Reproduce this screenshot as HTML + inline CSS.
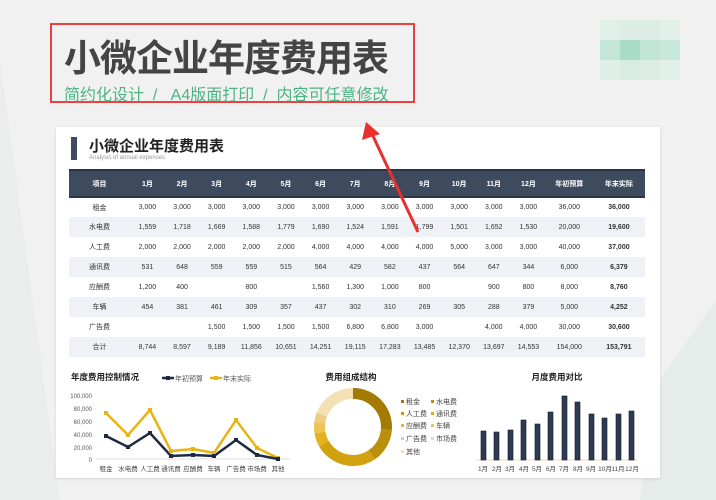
<!DOCTYPE html>
<html><head><meta charset="utf-8"><style>
*{margin:0;padding:0;box-sizing:border-box}
body{width:716px;height:500px;overflow:hidden;background:#f1f1f1;font-family:"Liberation Sans","Noto Sans CJK SC",sans-serif;position:relative}
.a{position:absolute}
.card{left:56px;top:127px;width:604px;height:351px;background:#fff;box-shadow:0 1px 3px rgba(0,0,0,.12)}
table{position:absolute;left:69px;top:169px;width:576px;border-collapse:collapse;font-size:7px;color:#333;table-layout:fixed}
th{background:#3e4a5e;color:#fff;height:27px;font-weight:bold;font-size:7px;border-top:2px solid #2c3545;border-bottom:2px solid #2c3545}
td{height:20px;text-align:center}
tr:nth-child(odd) td{background:#eef1f5}
td:last-child{font-weight:bold}
</style></head><body>
<svg class="a" style="left:0;top:0" width="716" height="500">
<polygon points="0,60 60,500 0,500" fill="#e9eeec"/>
<polygon points="660,380 716,300 716,500 640,500" fill="#e6ecea"/>
</svg>
<div class="a" style="left:600px;top:20px;width:80px;height:60px;display:grid;grid-template-columns:repeat(4,20px)">
<div style="background:#e0efe8"></div><div style="background:#dcede5"></div><div style="background:#dcede5"></div><div style="background:#e2f0e9"></div>
<div style="background:#c4e6d6"></div><div style="background:#a8dcc6"></div><div style="background:#c2e5d5"></div><div style="background:#c8e8d9"></div>
<div style="background:#dfeee7"></div><div style="background:#d9ece3"></div><div style="background:#dbede4"></div><div style="background:#e2f0e9"></div>
</div>
<div class="a" style="left:50px;top:23px;width:365px;height:80px;border:2px solid #e8413e"></div>
<div class="a" style="left:64px;top:28px;font-size:37px;font-weight:bold;color:#444;letter-spacing:-1px">小微企业年度费用表</div>
<div class="a" style="left:64px;top:81px;font-size:16px;color:#4db383;white-space:pre">简约化设计  /   A4版面打印  /  内容可任意修改</div>

<div class="a card"></div>
<div class="a" style="left:71px;top:137px;width:6px;height:23px;background:#3e4a5e"></div>
<div class="a" style="left:89px;top:135px;font-size:15px;font-weight:bold;color:#222">小微企业年度费用表</div>
<div class="a" style="left:89px;top:155px;font-size:6px;color:#999">Analysis of annual expenses</div>

<table>
<colgroup><col style="width:61px"><col span="12" style="width:34.6px"><col style="width:47px"><col style="width:52px"></colgroup>
<tr><th>项目</th><th>1月</th><th>2月</th><th>3月</th><th>4月</th><th>5月</th><th>6月</th><th>7月</th><th>8月</th><th>9月</th><th>10月</th><th>11月</th><th>12月</th><th>年初预算</th><th>年末实际</th></tr>
<tr><td>租金</td><td>3,000</td><td>3,000</td><td>3,000</td><td>3,000</td><td>3,000</td><td>3,000</td><td>3,000</td><td>3,000</td><td>3,000</td><td>3,000</td><td>3,000</td><td>3,000</td><td>36,000</td><td>36,000</td></tr>
<tr><td>水电费</td><td>1,559</td><td>1,718</td><td>1,669</td><td>1,588</td><td>1,779</td><td>1,690</td><td>1,524</td><td>1,591</td><td>1,799</td><td>1,501</td><td>1,652</td><td>1,530</td><td>20,000</td><td>19,600</td></tr>
<tr><td>人工费</td><td>2,000</td><td>2,000</td><td>2,000</td><td>2,000</td><td>2,000</td><td>4,000</td><td>4,000</td><td>4,000</td><td>4,000</td><td>5,000</td><td>3,000</td><td>3,000</td><td>40,000</td><td>37,000</td></tr>
<tr><td>通讯费</td><td>531</td><td>648</td><td>559</td><td>559</td><td>515</td><td>564</td><td>429</td><td>582</td><td>437</td><td>564</td><td>647</td><td>344</td><td>6,000</td><td>6,379</td></tr>
<tr><td>应酬费</td><td>1,200</td><td>400</td><td></td><td>800</td><td></td><td>1,560</td><td>1,300</td><td>1,000</td><td>800</td><td></td><td>900</td><td>800</td><td>8,000</td><td>8,760</td></tr>
<tr><td>车辆</td><td>454</td><td>381</td><td>461</td><td>309</td><td>357</td><td>437</td><td>302</td><td>310</td><td>269</td><td>305</td><td>288</td><td>379</td><td>5,000</td><td>4,252</td></tr>
<tr><td>广告费</td><td></td><td></td><td>1,500</td><td>1,500</td><td>1,500</td><td>1,500</td><td>6,800</td><td>6,800</td><td>3,000</td><td></td><td>4,000</td><td>4,000</td><td>30,000</td><td>30,600</td></tr>
<tr><td>合计</td><td>8,744</td><td>8,597</td><td>9,189</td><td>11,856</td><td>10,651</td><td>14,251</td><td>19,115</td><td>17,283</td><td>13,485</td><td>12,370</td><td>13,697</td><td>14,553</td><td>154,000</td><td>153,791</td></tr>
</table>

<svg class="a" style="left:0;top:0" width="716" height="500" font-family="Liberation Sans,Noto Sans CJK SC,sans-serif">
<text x="71" y="380" font-size="8.5" font-weight="bold" fill="#222">年度费用控制情况</text>
<line x1="162" y1="378" x2="174" y2="378" stroke="#1e2a40" stroke-width="2.5"/><rect x="166" y="376" width="4" height="4" fill="#1e2a40"/>
<text x="175" y="381" font-size="7" fill="#555">年初预算</text>
<line x1="210" y1="378" x2="222" y2="378" stroke="#e7b416" stroke-width="2.5"/><rect x="214" y="376" width="4" height="4" fill="#e7b416"/>
<text x="223" y="381" font-size="7" fill="#555">年末实际</text>
<g font-size="6" fill="#555" text-anchor="end">
<text x="92" y="398">100,000</text><text x="92" y="411">80,000</text><text x="92" y="424">60,000</text><text x="92" y="437">40,000</text><text x="92" y="450">20,000</text><text x="92" y="462">0</text></g>
<line x1="96" y1="459" x2="290" y2="459" stroke="#ddd"/>
<polyline fill="none" stroke="#e7b416" stroke-width="2.5" points="106,413 128,435 150,410 171,451 193,449 214,453 236,420 257,448 278,458"/>
<polyline fill="none" stroke="#1e2a40" stroke-width="2.5" points="106,436 128,447 150,433 171,456 193,455 214,456 236,440 257,455 278,459"/>
<g fill="#e7b416"><rect x="104" y="411" width="4" height="4"/><rect x="126" y="433" width="4" height="4"/><rect x="148" y="408" width="4" height="4"/><rect x="169" y="449" width="4" height="4"/><rect x="191" y="447" width="4" height="4"/><rect x="212" y="451" width="4" height="4"/><rect x="234" y="418" width="4" height="4"/><rect x="255" y="446" width="4" height="4"/><rect x="276" y="456" width="4" height="4"/></g>
<g fill="#1e2a40"><rect x="104" y="434" width="4" height="4"/><rect x="126" y="445" width="4" height="4"/><rect x="148" y="431" width="4" height="4"/><rect x="169" y="454" width="4" height="4"/><rect x="191" y="453" width="4" height="4"/><rect x="212" y="454" width="4" height="4"/><rect x="234" y="438" width="4" height="4"/><rect x="255" y="453" width="4" height="4"/><rect x="276" y="457" width="4" height="4"/></g>
<g font-size="6.5" fill="#444" text-anchor="middle"><text x="106" y="471">租金</text><text x="128" y="471">水电费</text><text x="150" y="471">人工费</text><text x="171" y="471">通讯费</text><text x="193" y="471">应酬费</text><text x="214" y="471">车辆</text><text x="236" y="471">广告费</text><text x="257" y="471">市场费</text><text x="278" y="471">其他</text></g>

<text x="351" y="380" font-size="8.5" font-weight="bold" fill="#222" text-anchor="middle">费用组成结构</text>
<g fill="none" stroke-width="11" transform="translate(353,427) rotate(-90)">
<circle r="33.5" stroke="#f3e0b5" stroke-dasharray="210.5 0"/>
<circle r="33.5" stroke="#a27a04" stroke-dasharray="0 0 55 200"/>
<circle r="33.5" stroke="#b98f0c" stroke-dasharray="0 55 30 200"/>
<circle r="33.5" stroke="#d1a10f" stroke-dasharray="0 85 55 200"/>
<circle r="33.5" stroke="#e4b21e" stroke-dasharray="0 140 12 200"/>
<circle r="33.5" stroke="#eec255" stroke-dasharray="0 152 10 200"/>
<circle r="33.5" stroke="#f0cc80" stroke-dasharray="0 162 8 200"/>
</g>
<g font-size="7" fill="#444">
<rect x="401" y="400" width="3" height="3" fill="#a27a04"/><text x="406" y="404">租金</text>
<rect x="431" y="400" width="3" height="3" fill="#b98f0c"/><text x="436" y="404">水电费</text>
<rect x="401" y="412" width="3" height="3" fill="#c89a0e"/><text x="406" y="416">人工费</text>
<rect x="431" y="412" width="3" height="3" fill="#e0ae18"/><text x="436" y="416">通讯费</text>
<rect x="401" y="424" width="3" height="3" fill="#e8b930"/><text x="406" y="428">应酬费</text>
<rect x="431" y="424" width="3" height="3" fill="#eec255"/><text x="436" y="428">车辆</text>
<rect x="401" y="437" width="3" height="3" fill="#f0cc80"/><text x="406" y="441">广告费</text>
<rect x="431" y="437" width="3" height="3" fill="#f3d79c"/><text x="436" y="441">市场费</text>
<rect x="401" y="450" width="3" height="3" fill="#f5e2bb"/><text x="406" y="454">其他</text></g>

<text x="557" y="380" font-size="8.5" font-weight="bold" fill="#222" text-anchor="middle">月度费用对比</text>
<line x1="476" y1="460" x2="638" y2="460" stroke="#e8d8c0"/>
<g fill="#2c3a52" stroke="#111a2a" stroke-width="0.6">
<rect x="481" y="431" width="5" height="29"/><rect x="494" y="432" width="5" height="28"/><rect x="508" y="430" width="5" height="30"/><rect x="521" y="420" width="5" height="40"/><rect x="535" y="424" width="5" height="36"/><rect x="548" y="412" width="5" height="48"/><rect x="562" y="396" width="5" height="64"/><rect x="575" y="402" width="5" height="58"/><rect x="589" y="414" width="5" height="46"/><rect x="602" y="418" width="5" height="42"/><rect x="616" y="414" width="5" height="46"/><rect x="629" y="411" width="5" height="49"/></g>
<g font-size="6.5" fill="#444" text-anchor="middle"><text x="483" y="471">1月</text><text x="497" y="471">2月</text><text x="510" y="471">3月</text><text x="524" y="471">4月</text><text x="537" y="471">5月</text><text x="551" y="471">6月</text><text x="564" y="471">7月</text><text x="578" y="471">8月</text><text x="591" y="471">9月</text><text x="605" y="471">10月</text><text x="618" y="471">11月</text><text x="632" y="471">12月</text></g>

<line x1="418" y1="232" x2="373" y2="136" stroke="#e8302c" stroke-width="3"/>
<polygon points="366,122 362,140 380,134" fill="#e8302c"/>
</svg>
</body></html>
